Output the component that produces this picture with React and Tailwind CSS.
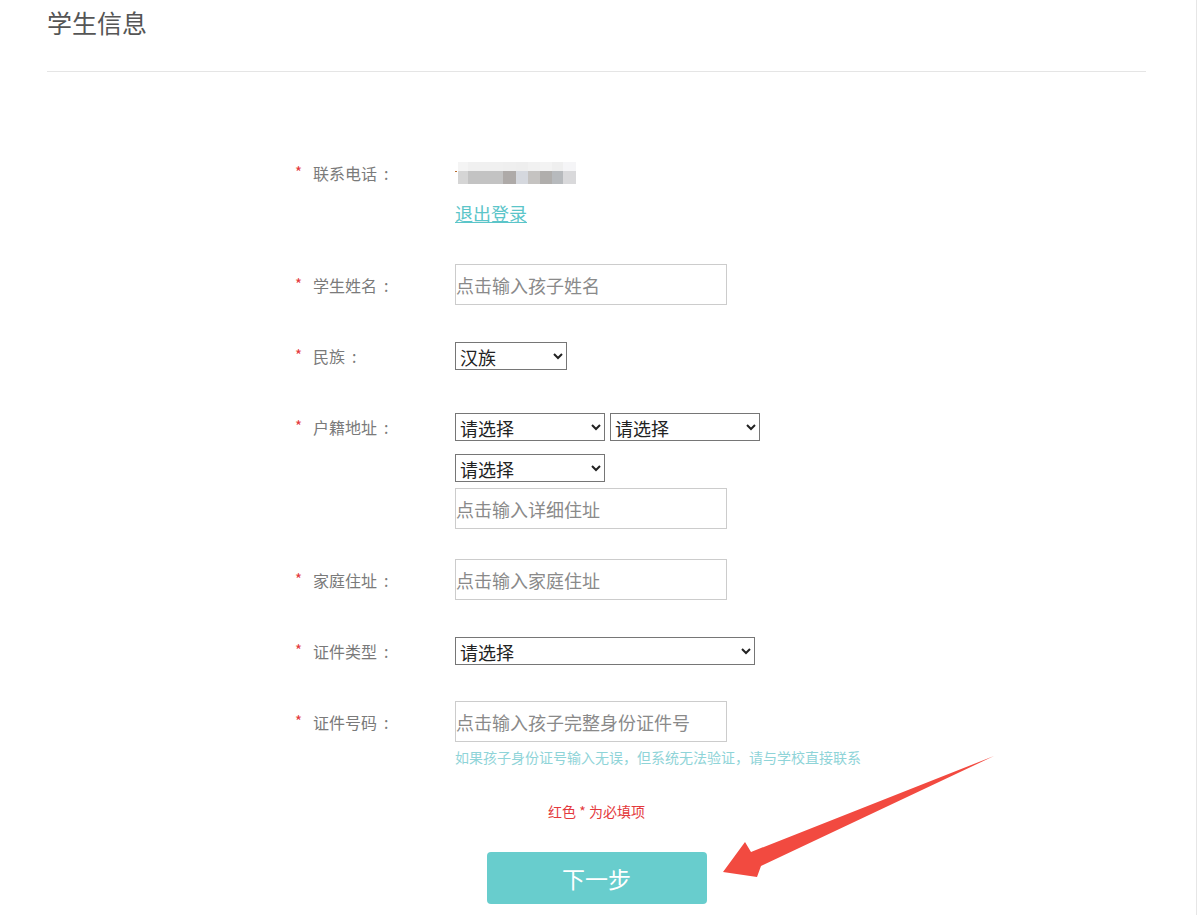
import React from "react";

const font = { fontFamily: '"Noto Sans CJK SC", "Noto Sans", sans-serif' };

function Label({ children }) {
  return (
    <div className="w-[160px] h-[41px] flex items-center shrink-0 text-[16px] text-[#7a7a7a]">
      <span className="w-[18px] text-[#e4393c] text-[15px]">*</span>
      <span>{children}</span>
      <span className="ml-[7px]">:</span>
    </div>
  );
}

function TextInput({ placeholder }) {
  return (
    <input
      type="text"
      placeholder={placeholder}
      className="w-[272px] h-[41px] border border-[#cccccc] bg-white px-0 text-[18px] text-[#333] placeholder:text-[#8a8a8a] outline-none"
    />
  );
}

function Select({ width, value }) {
  return (
    <select
      defaultValue={value}
      className={`${width} h-[28px] border border-[#767676] bg-white pl-0 text-[18px] text-[#222] leading-[24px]`}
    >
      <option>{value}</option>
    </select>
  );
}

// blurred phone number mosaic
const topRow = ["#f4f4f4", "#f0f0f0", "#efefef", "#eeeeee", "#f1f1f1", "#f3f3f3", "#efefef", "#f5f5f7"];
const bottomRow = ["#d5d5d5", "#c3c3c3", "#aeaaa8", "#d5d8de", "#c5c3c1", "#b0aeac", "#b7babd", "#d9d9db"];
const widths = [10, 35, 13, 12, 12, 12, 11, 13];

function Mosaic() {
  return (
    <div className="relative flex flex-col pl-[3px]">
      <div className="flex h-[9px]">
        {topRow.map((c, i) => (
          <div key={i} style={{ width: widths[i], background: c }} />
        ))}
      </div>
      <div className="flex h-[13px]">
        {bottomRow.map((c, i) => (
          <div key={i} style={{ width: widths[i], background: c }} />
        ))}
      </div>
      <div className="absolute left-0 top-[9px] w-[2px] h-[1px] bg-[#b86a2a]" />
    </div>
  );
}

export default function App() {
  return (
    <div className="relative w-[1199px] min-h-[915px] bg-white overflow-hidden" style={font}>
      <div className="absolute right-[2px] top-0 bottom-0 w-[1px] bg-[#e6e6e6]" />

      <div className="ml-[47px] w-[1099px]">
        <div className="h-[72px] border-b border-[#e5e5e5] pt-[6px]">
          <h2 className="text-[25px] leading-[32px] text-[#555]">学生信息</h2>
        </div>

        <div className="mt-[80px] pl-[248px]">
          {/* 联系电话 */}
          <div className="flex mb-[30px]">
            <Label>联系电话</Label>
            <div className="flex flex-col">
              <div className="h-[41px] flex items-center">
                <Mosaic />
              </div>
              <div className="h-[41px] flex items-center">
                <a href="#" className="text-[18px] text-[#5bc5c9] underline">
                  退出登录
                </a>
              </div>
            </div>
          </div>

          {/* 学生姓名 */}
          <div className="flex mb-[30px]">
            <Label>学生姓名</Label>
            <TextInput placeholder="点击输入孩子姓名" />
          </div>

          {/* 民族 */}
          <div className="flex mb-[30px]">
            <Label>民族</Label>
            <div className="h-[41px] flex items-center">
              <Select width="w-[112px]" value="汉族" />
            </div>
          </div>

          {/* 户籍地址 */}
          <div className="flex mb-[30px]">
            <Label>户籍地址</Label>
            <div className="flex flex-col">
              <div className="h-[41px] flex items-center gap-[5px]">
                <Select width="w-[150px]" value="请选择" />
                <Select width="w-[150px]" value="请选择" />
              </div>
              <div className="h-[41px] flex items-center">
                <Select width="w-[150px]" value="请选择" />
              </div>
              <TextInput placeholder="点击输入详细住址" />
            </div>
          </div>

          {/* 家庭住址 */}
          <div className="flex mb-[30px]">
            <Label>家庭住址</Label>
            <TextInput placeholder="点击输入家庭住址" />
          </div>

          {/* 证件类型 */}
          <div className="flex mb-[30px]">
            <Label>证件类型</Label>
            <div className="h-[41px] flex items-center">
              <Select width="w-[300px]" value="请选择" />
            </div>
          </div>

          {/* 证件号码 */}
          <div className="flex">
            <Label>证件号码</Label>
            <div className="flex flex-col">
              <TextInput placeholder="点击输入孩子完整身份证件号" />
              <p className="h-[30px] leading-[30px] text-[14px] text-[#8fd4d8] whitespace-nowrap">
                如果孩子身份证号输入无误，但系统无法验证，请与学校直接联系
              </p>
            </div>
          </div>
        </div>

        <p className="mt-[29px] text-center text-[14px] leading-[20px] text-[#e4393c]">红色 * 为必填项</p>

        <div className="mt-[31px] flex justify-center">
          <button className="w-[220px] h-[52px] rounded-[4px] bg-[#68cdcd] text-white text-[23px]">
            下一步
          </button>
        </div>
      </div>

      {/* annotation arrow */}
      <svg className="absolute left-0 top-0 pointer-events-none" width="1199" height="915" viewBox="0 0 1199 915">
        <polygon
          points="723,872 745,842 751,852 994,756 761,866 757,877"
          fill="#f24a40"
        />
      </svg>
    </div>
  );
}
